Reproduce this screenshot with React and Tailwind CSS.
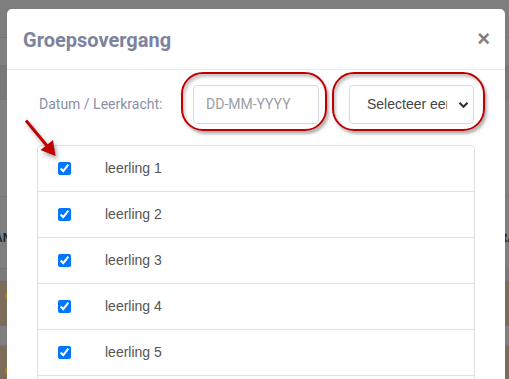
import React from "react";

const rows = ["leerling 1", "leerling 2", "leerling 3", "leerling 4", "leerling 5", "leerling 6"];

export default function App() {
  return (
    <div className="relative w-[509px] h-[379px] overflow-hidden bg-[#7f7f7f] font-['Roboto',sans-serif]">
      {/* dimmed page behind the modal */}
      <div className="flex flex-col w-full">
        <div className="h-[38px] bg-[#7e7e7e] border-b border-[#747474]" />
        <div className="h-[27px] bg-[#808080]" />
        <div className="h-[35px] bg-[#787878]" />
        <div className="h-[97px] bg-[#808080] border-b border-[#747474]" />
        <div className="h-[71px] bg-[#7f7f7f] flex items-center justify-between text-[12px] font-bold text-[#1d2430] font-['Liberation_Sans',sans-serif]">
          <span className="ml-[-6px] mt-[10px]">AN</span>
          <span className="mr-[-7px] mt-[10px]">RA</span>
        </div>
        <div className="h-[13px] bg-[#7a7a7a] border-t border-[#747474]" />
        <div className="h-[45px] bg-[#7b6d58] relative">
          <span className="absolute left-[5px] top-[12px] w-[2px] h-[6px] bg-[#a07a20]" />
        </div>
        <div className="h-[20px] bg-[#7f7f7f] border-b border-[#747474]" />
        <div className="h-[40px] bg-[#7b6d58] relative">
          <span className="absolute left-[5px] top-[22px] w-[2px] h-[6px] bg-[#a07a20]" />
        </div>
      </div>

      {/* modal */}
      <div className="absolute left-[7px] top-[9px] w-[498px] h-[420px] bg-white rounded-[5px]">
        <div className="h-[61px] flex items-center justify-between pl-[16px] pr-[15px] border-b border-[#e9ecef]">
          <h2 className="text-[20px] font-bold text-[#7c839c] leading-none mt-[1px]">Groepsovergang</h2>
          <span className="text-[22px] font-bold text-[#7f7f7f] leading-none font-['Liberation_Sans',sans-serif]">×</span>
        </div>
        <div className="px-[30px] pt-[15px]">
          <div className="flex items-center">
            <label className="w-[156px] pl-[2px] text-[14px] text-[#8a90a8]">Datum / Leerkracht:</label>
            <div className="w-[126px] h-[39px] border border-[#d6dae0] rounded-[4px] flex items-center pl-[12px] text-[14px] text-[#9aa0a6]">
              DD-MM-YYYY
            </div>
            <div className="ml-[30px] w-[125px] h-[39px] border border-[#d6dae0] rounded-[4px] flex items-center pl-[17px] pr-[4px] text-[14px] text-[#444] font-['Liberation_Sans',sans-serif]">
              <span className="w-[80px] overflow-hidden whitespace-nowrap">Selecteer een leerkracht</span>
              <svg className="ml-auto" width="11" height="8" viewBox="0 0 11 8">
                <path d="M1.5 1.8 L5.5 5.8 L9.5 1.8" fill="none" stroke="#333" strokeWidth="2.2" />
              </svg>
            </div>
          </div>
          <div className="mt-[21px] border border-[#dee2e6] rounded-t-[4px]">
            {rows.map((r) => (
              <div key={r} className="h-[46px] flex items-center pl-[20px] border-b border-[#dee2e6]">
                <input type="checkbox" defaultChecked className="m-0 w-[13px] h-[13px]" />
                <span className="ml-[34px] text-[14px] text-[#555] font-['Liberation_Sans',sans-serif]">{r}</span>
              </div>
            ))}
          </div>
        </div>
      </div>

      {/* annotations */}
      <div className="absolute left-[181px] top-[72px] w-[146px] h-[59px] border-2 border-[#c00000] rounded-[22px] shadow-[2px_3px_3px_rgba(0,0,0,0.3),inset_2px_3px_3px_rgba(0,0,0,0.22)]" />
      <div className="absolute left-[332px] top-[72px] w-[153px] h-[59px] border-2 border-[#c00000] rounded-[22px] shadow-[2px_3px_3px_rgba(0,0,0,0.3),inset_2px_3px_3px_rgba(0,0,0,0.22)]" />
      <svg className="absolute left-0 top-0" width="509" height="379" style={{ filter: "drop-shadow(2px 3px 2px rgba(0,0,0,0.35))" }}>
        <line x1="26" y1="120.5" x2="48" y2="147" stroke="#c00000" strokeWidth="3" />
        <polygon points="55.5,156 40.5,150 53,140" fill="#c00000" />
      </svg>
    </div>
  );
}
